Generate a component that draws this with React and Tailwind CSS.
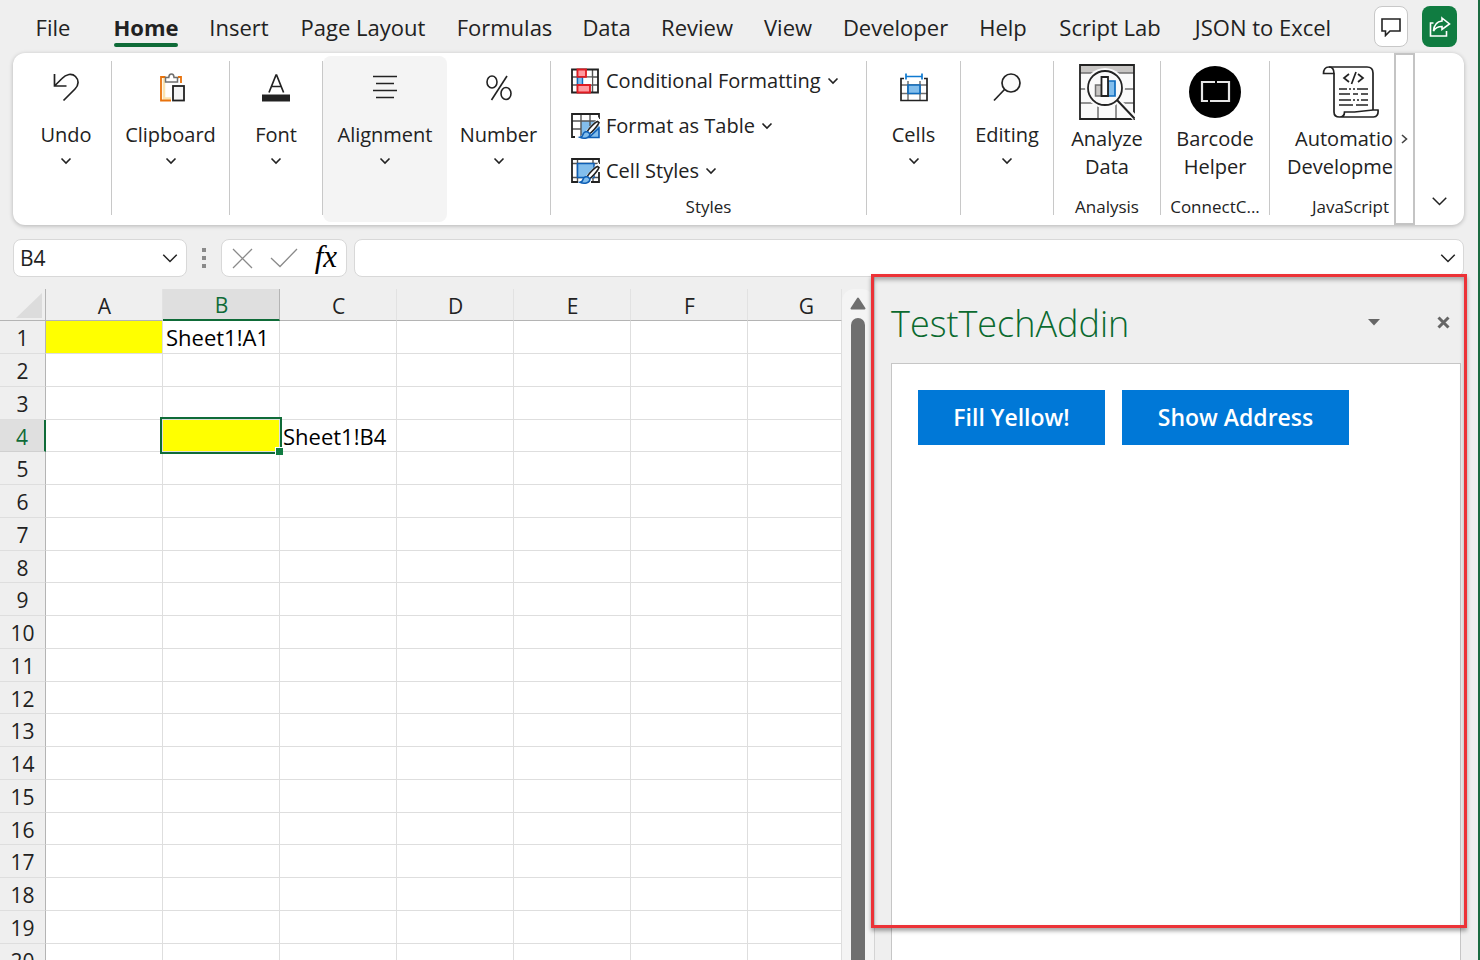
/**
 * App.jsx — Spreadsheet window with a docked add-in task pane
 *
 * Top to bottom: menu tabs, ribbon, formula bar, then the sheet
 * with its scrollbar on the left and the add-in pane on the right.
 */

// ── Menu tabs (each keeps its own label width) ───────────────────
const TABS = [
  { label: 'File', width: 'w-[34px] mr-3' },
  { label: 'Home', width: 'w-[64px]', active: true },
  { label: 'Insert', width: 'w-[58px]' },
  { label: 'Page Layout', width: 'w-[126px]' },
  { label: 'Formulas', width: 'w-[93px]' },
  { label: 'Data', width: 'w-[47px]' },
  { label: 'Review', width: 'w-[70px]' },
  { label: 'View', width: 'w-[48px]' },
  { label: 'Developer', width: 'w-[103px]' },
  { label: 'Help', width: 'w-[48px]' },
  { label: 'Script Lab', width: 'w-[102px]' },
  { label: 'JSON to Excel', width: 'w-[140px]' },
]

// ── Sheet data ───────────────────────────────────────────────────
const COLUMNS = ['A', 'B', 'C', 'D', 'E', 'F', 'G']
const ROWS = Array.from({ length: 20 }, (_, i) => i + 1)
const SELECTED = { col: 'B', row: 4 }
const CELLS = {
  A1: { fill: true },
  B1: { text: 'Sheet1!A1' },
  B4: { fill: true },
  C4: { text: 'Sheet1!B4' },
}

// ── Icons ────────────────────────────────────────────────────────
function Chevron({ className = 'w-[10px] h-[6px]', stroke = 1.6 }) {
  return (
    <svg viewBox="0 0 10 6" className={`${className} shrink-0 overflow-visible`} fill="none" stroke="#222" strokeWidth={stroke} aria-hidden="true">
      <path d="M0.5 0.5 5 5 9.5 0.5" />
    </svg>
  )
}

function UndoIcon() {
  return (
    <svg width="28" height="32" viewBox="0 0 28 32" fill="none" stroke="#222" strokeWidth="1.7" aria-hidden="true">
      <path d="M2.500 2v12h12M3 13.500 10 6.500C14 2 20 1 23.500 4.500S27 13 23 17L11.500 28.500" />
    </svg>
  )
}

function ClipboardIcon() {
  return (
    <svg width="28" height="32" viewBox="-1 0 28 32" fill="none" aria-hidden="true">
      <path d="M6 6v20.500h7M7 6h14" stroke="#fbe3b0" strokeWidth="2.5" />
      <path d="M7.500 5H3v23.500h10M20 5h3v6" stroke="#e8720c" strokeWidth="1.8" />
      <path d="M7.500 10V5.500h3.300c0-2 1-3.500 2.700-3.500S16 3.500 16 5.500h3.500V10z" stroke="#707070" strokeWidth="1.5" fill="#fff" />
      <rect x="15" y="14" width="11" height="14.500" fill="#f5f5f5" stroke="#222" strokeWidth="1.8" />
    </svg>
  )
}

function FontIcon() {
  return (
    <svg width="28" height="32" viewBox="0 0 28 32" fill="none" aria-hidden="true">
      <path d="M7 20.500 14 3h.6l7 17.500M9.500 14.500h9.600" stroke="#222" strokeWidth="1.700" />
      <path d="M0 22.500h28v7H0z" fill="#222" />
    </svg>
  )
}

function AlignIcon() {
  return (
    <svg width="26" height="32" viewBox="0 0 26 32" stroke="#222" strokeWidth="1.700" aria-hidden="true">
      <path d="M1 4.500h24M4 11.500h18M1 18.500h24M4 25.500h18" />
    </svg>
  )
}

function PercentIcon() {
  return (
    <svg width="28" height="32" viewBox="0 0 28 32" fill="none" stroke="#222" strokeWidth="1.600" aria-hidden="true">
      <ellipse cx="7" cy="10" rx="5" ry="6" />
      <ellipse cx="21" cy="21.500" rx="5" ry="6" />
      <path d="M22 4 6.500 28" />
    </svg>
  )
}

function CellsIcon() {
  return (
    <svg width="28" height="32" viewBox="0 0 28 32" fill="none" aria-hidden="true">
      <path d="M1 13h26M1 21.500h26M8 9v20M20 9v20" stroke="#707070" strokeWidth="1.500" />
      <path d="M4 6.500H1V28.500h26V6.500h-3" stroke="#222" strokeWidth="1.700" />
      <path d="M8 13h12v8.500H8z" fill="#83beec" stroke="#0f6cbd" strokeWidth="1.700" />
      <path d="M6 1.500v6M22 1.500v6M6 4.500h16" stroke="#0f7ad1" strokeWidth="1.700" />
    </svg>
  )
}

function EditingIcon() {
  return (
    <svg width="28" height="32" viewBox="0 0 28 32" fill="none" stroke="#222" strokeWidth="1.700" aria-hidden="true">
      <circle cx="18" cy="11" r="9" fill="#fafafa" />
      <path d="M11.500 17.500 1 28.500" />
    </svg>
  )
}

function ConditionalIcon() {
  return (
    <svg width="28" height="26" viewBox="0 0 28 26" fill="none" aria-hidden="true">
      <path d="M1 9h26M1 17h26M6.500 1v24M14 1v24M21.500 1v24" stroke="#555" strokeWidth="1.400" />
      <path d="M12 9.700h9v6.600h-9z" fill="#fff" />
      <path d="M1 1.500h26v23H1z" stroke="#222" strokeWidth="1.800" />
      <path d="M6.500 9h5v8h-5z" fill="#83beec" stroke="#0f6cbd" strokeWidth="1.400" />
      <path d="M6.500 1.500H15v7.300H6.500zM6.500 17H19v7.500H6.500z" fill="#ff9ba0" stroke="#e01b22" strokeWidth="1.800" />
    </svg>
  )
}

function Brush() {
  return (
    <>
      <path d="M9 25 28 5v8L16 27z" fill="#fff" />
      <path d="M26.500 9.500c-3 1-9.500 8-10.500 10.500l2 2c2.500-1 9-8.500 10-11.500z" fill="#fff" stroke="#222" strokeWidth="1.600" />
      <path d="M17 20c-2.500-1-4.500.5-5 2.500s-1.500 2.500-3 2.800c4 2 10 .7 10-3.300z" fill="#83beec" stroke="#0f5fb5" strokeWidth="1.600" />
    </>
  )
}

function TableStyleIcon() {
  return (
    <svg width="30" height="28" viewBox="0 0 30 28" fill="none" aria-hidden="true">
      <path d="M10 9h18v16H10z" fill="#83beec" />
      <path d="M18 25.500h10V16z" fill="#83beec" stroke="#0f5fb5" strokeWidth="1.600" />
      <path d="M1 9h27M1 17h9M10 2v22M19 2v12" stroke="#555" strokeWidth="1.400" />
      <path d="M28 7V2H1v23h3" stroke="#222" strokeWidth="1.800" />
      <Brush />
    </svg>
  )
}

function CellStyleIcon() {
  return (
    <svg width="30" height="28" viewBox="0 0 30 28" fill="none" aria-hidden="true">
      <path d="M1 6.500h27M6.500 2v23M22 2v23M1 20.500h27" stroke="#555" strokeWidth="1.400" />
      <path d="M6.500 6.500H23v14H6.500z" fill="#83beec" stroke="#0f5fb5" strokeWidth="1.600" />
      <path d="M28 7V2H1v23h6M20 25h8V15" stroke="#222" strokeWidth="1.800" />
      <Brush />
    </svg>
  )
}

function AnalyzeIcon() {
  return (
    <svg width="56" height="56" viewBox="0 0 56 56" fill="none" aria-hidden="true">
      <path d="M1 1h54v54H1z" fill="#fafafa" />
      <path d="M1 1h54v8H1z" fill="#c8c6c4" />
      <path d="M1 9h54M1 25h54M1 39h54M19 39v16M37 39v16" stroke="#707070" strokeWidth="1.500" />
      <path d="M1 1h54v54H1z" stroke="#222" strokeWidth="1.800" />
      <circle cx="26" cy="24" r="20" fill="#fafafa" />
      <path d="m38 36 18 18" stroke="#fafafa" strokeWidth="6" />
      <path d="M16.500 21h6v11h-6z" fill="#c8c6c4" stroke="#707070" strokeWidth="1.500" />
      <path d="M29 17h7v15h-7z" fill="#83beec" stroke="#0f6cbd" strokeWidth="1.700" />
      <path d="M22.500 13h6.500v19h-6.500z" fill="#fff" stroke="#222" strokeWidth="1.800" />
      <circle cx="26" cy="24" r="17" stroke="#222" strokeWidth="1.800" />
      <path d="m38 36 17.500 18.500" stroke="#222" strokeWidth="2" />
    </svg>
  )
}

function BarcodeIcon() {
  return (
    <svg width="56" height="56" viewBox="0 0 56 56" fill="none" aria-hidden="true">
      <circle cx="28" cy="28" r="26" fill="#000" />
      <path d="M28 18H15v19h6M23 37h19V18H30" stroke="#e5e5e5" strokeWidth="2.200" />
    </svg>
  )
}

function ScriptIcon() {
  return (
    <svg width="57" height="56" viewBox="0 0 57 56" fill="none" stroke="#222" strokeWidth="1.700" aria-hidden="true">
      <path d="M7 3h38c4 0 6 2 6 6v37" />
      <path d="M7 3C3 3 1.500 6 1.500 9.500H12C12 6 10.500 3 7 3z" />
      <path d="M12 9.500V48c0 3 2 5 5.500 5s5-2 5-5h10L51 46h5c.5 4-1 7-4.500 7h-34" />
      <path d="m27 10-5 4 5 4M36 10l5 4-5 4M34 8l-4.500 12" />
      <path d="M17 25h8M27 25h2M31 25h2M35 25h11M17 30h11M31 30h5M39 30h7M17 36h12M31 36h2M35 36h2M39 36h7M17 41h14M34 41h12" strokeWidth="1.500" />
    </svg>
  )
}

// ── Ribbon building blocks ───────────────────────────────────────
function Divider() {
  return <span className="w-px shrink-0 mt-2 mb-[10px] bg-[#c8c8c8]" />
}

function CollapsedGroup({ label, icon: Icon, className }) {
  return (
    <button type="button" className={`${className} shrink-0 flex flex-col items-center pt-[17px]`}>
      <span className="h-9 flex items-center"><Icon /></span>
      <span className="mt-[15px] leading-7">{label}</span>
      <span className="mt-[7px] h-[10px] flex items-center"><Chevron /></span>
    </button>
  )
}

function LargeGroup({ lines, caption, icon: Icon, className }) {
  return (
    <div className={`${className} shrink-0 flex flex-col items-center pt-[11px]`}>
      <button type="button" className="flex flex-col items-center">
        <Icon />
        <span className="mt-[5px] leading-7">{lines[0]}</span>
        <span className="leading-7">{lines[1]}</span>
      </button>
      <span className="mt-[14px] text-[17px] leading-6">{caption}</span>
    </div>
  )
}

function StyleCommand({ label, icon: Icon }) {
  return (
    <button type="button" className="h-[45px] flex items-center">
      <span className="w-[35px] flex"><Icon /></span>
      <span>{label}</span>
      <span className="ml-[7px]"><Chevron /></span>
    </button>
  )
}

function MenuBar() {
  return (
    <header className="h-[53px] shrink-0 flex items-start justify-between pl-9 pr-[21px]">
      <nav className="flex gap-8 pt-[11px]">
        {TABS.map(({ label, width, active }) => (
          <button
            key={label}
            type="button"
            className={`${width} shrink-0 flex flex-col items-center text-[22px] leading-8 whitespace-nowrap ${active ? 'font-bold' : ''}`}
          >
            {label}
            {active && <span className="w-full h-1 rounded-full bg-[#0f6b38]" />}
          </button>
        ))}
      </nav>
      <div className="flex gap-[14px] pt-[6px]">
        <button type="button" aria-label="Comments" className="w-[34px] h-[41px] flex items-center justify-center bg-white border border-[#c8c8c8] rounded-lg">
          <svg width="20" height="20" viewBox="0 0 20 20" fill="none" stroke="#222" strokeWidth="1.600" aria-hidden="true">
            <path d="M1 2h18v12H9l-4.500 4.500V14H1z" />
          </svg>
        </button>
        <button type="button" aria-label="Share" className="w-[35px] h-[41px] flex items-center justify-center bg-[#107c41] rounded-lg">
          <svg width="22" height="22" viewBox="0 0 22 22" fill="none" stroke="#fff" strokeWidth="1.600" aria-hidden="true">
            <path d="M4.500 7H1.500v13h16v-5" />
            <path d="M13 2l7.500 6L13 13.500V10.500c-4 0-6.500 1-8.500 4.500.5-6 3.500-9.500 8.500-10z" />
          </svg>
        </button>
      </div>
    </header>
  )
}

function Ribbon() {
  return (
    <section className="h-[172px] shrink-0 ml-[13px] mr-[14px] flex bg-white rounded-xl shadow-[0_1px_4px_rgba(0,0,0,0.25)] text-[20px]">
      <div className="flex-1 min-w-0 flex overflow-hidden">
        <CollapsedGroup label="Undo" icon={UndoIcon} className="w-[98px] pl-2" />
        <Divider />
        <CollapsedGroup label="Clipboard" icon={ClipboardIcon} className="w-[117px]" />
        <Divider />
        <CollapsedGroup label="Font" icon={FontIcon} className="w-[92px]" />
        <Divider />
        <div className="w-[124px] shrink-0 flex py-[3px]">
          <button type="button" className="w-full flex flex-col items-center pt-[14px] bg-[#f4f4f4] rounded-lg">
            <span className="h-9 flex items-center"><AlignIcon /></span>
            <span className="mt-[15px] leading-7">Alignment</span>
            <span className="mt-[7px] h-[10px] flex items-center"><Chevron /></span>
          </button>
        </div>
        <CollapsedGroup label="Number" icon={PercentIcon} className="w-[103px]" />
        <Divider />
        <div className="w-[315px] shrink-0 flex flex-col items-start pt-[5px] pl-5">
          <StyleCommand label="Conditional Formatting" icon={ConditionalIcon} />
          <StyleCommand label="Format as Table" icon={TableStyleIcon} />
          <StyleCommand label="Cell Styles" icon={CellStyleIcon} />
          <span className="w-full pr-5 mt-[2px] text-center text-[17px] leading-6">Styles</span>
        </div>
        <Divider />
        <CollapsedGroup label="Cells" icon={CellsIcon} className="w-[93px]" />
        <Divider />
        <CollapsedGroup label="Editing" icon={EditingIcon} className="w-[92px]" />
        <Divider />
        <LargeGroup lines={['Analyze', 'Data']} caption="Analysis" icon={AnalyzeIcon} className="w-[106px]" />
        <Divider />
        <LargeGroup lines={['Barcode', 'Helper']} caption="ConnectC..." icon={BarcodeIcon} className="w-[108px]" />
        <Divider />

        {/* Last group runs up against the scroll button */}
        <div className="flex-1 min-w-0 flex flex-col items-end pt-[11px] pr-px">
          <button type="button" className="flex flex-col items-end">
            <span className="flex pr-[14px]"><ScriptIcon /></span>
            <span className="mt-[5px] leading-7">Automatio</span>
            <span className="leading-7">Developme</span>
          </button>
          <span className="mt-[14px] pr-1 text-[17px] leading-6">JavaScript</span>
        </div>
      </div>
      <button type="button" aria-label="Scroll ribbon" className="w-[21px] shrink-0 flex items-center justify-center border-2 border-[#c4c4c4]">
        <svg width="7" height="10" viewBox="0 0 7 10" fill="none" stroke="#444" strokeWidth="1.600" aria-hidden="true">
          <path d="M1 1l4.500 4L1 9" />
        </svg>
      </button>
      <div className="w-[49px] shrink-0 flex items-end justify-center pb-[19px]">
        <button type="button" aria-label="Collapse ribbon" className="flex">
          <Chevron className="w-[17px] h-[9px]" stroke={1} />
        </button>
      </div>
    </section>
  )
}

function FormulaBar() {
  return (
    <div className="shrink-0 flex items-center pt-[14px] pl-[13px] pr-[14px]">
      <div className="w-[174px] h-[38px] flex items-center pl-[6px] pr-2 bg-white border border-[#d8d8d8] rounded-lg">
        <input aria-label="Name box" defaultValue="B4" className="flex-1 min-w-0 pt-[2px] text-[21px] outline-none" />
        <button type="button" aria-label="Show names" className="flex">
          <Chevron className="w-4 h-[9px]" stroke={1} />
        </button>
      </div>
      <div className="w-[34px] flex flex-col items-center gap-1">
        <span className="size-[4px] bg-[#8a8a8a]" />
        <span className="size-[4px] bg-[#8a8a8a]" />
        <span className="size-[4px] bg-[#8a8a8a]" />
      </div>
      <div className="w-[126px] h-[38px] flex items-center justify-between pl-[10px] pr-[9px] bg-white border border-[#d8d8d8] rounded-lg">
        <button type="button" aria-label="Cancel">
          <svg width="21" height="21" viewBox="0 0 21 21" stroke="#8a8a8a" strokeWidth="1.300" aria-hidden="true">
            <path d="m1 1 19 19M20 1 1 20" />
          </svg>
        </button>
        <button type="button" aria-label="Enter">
          <svg width="28" height="20" viewBox="0 0 28 20" fill="none" stroke="#8a8a8a" strokeWidth="1.300" aria-hidden="true">
            <path d="m1 10 9 8.500L27 1" />
          </svg>
        </button>
        <button type="button" aria-label="Insert function" className="pb-[2px] font-['Liberation_Serif',serif] italic text-[31px] leading-8 text-black">
          fx
        </button>
      </div>
      <div className="flex-1 min-w-0 h-[38px] ml-[7px] flex items-center px-[7px] bg-white border border-[#d8d8d8] rounded-lg">
        <input aria-label="Formula" className="flex-1 min-w-0 text-[21px] outline-none" />
        <button type="button" aria-label="Expand formula bar" className="flex">
          <Chevron className="w-4 h-[9px]" stroke={1} />
        </button>
      </div>
    </div>
  )
}

function Cell({ id, selected }) {
  const cell = CELLS[id] || {}

  return (
    <td className={`p-0 border-r border-b border-[#dedede] ${cell.fill ? 'bg-[#ffff00]' : ''} ${selected ? 'relative z-10' : ''}`}>
      {cell.text && (
        <span className="block pl-[3px] text-[22px] leading-7 text-black">{cell.text}</span>
      )}
      {selected && (
        <span className="absolute -inset-[3px] border-2 border-[#0f6b38]">
          <span className="absolute -right-[3px] -bottom-[3px] size-[8px] bg-[#107c41] border-t border-l border-white" />
        </span>
      )}
    </td>
  )
}

function Sheet() {
  return (
    <div className="flex-1 min-w-0 mt-[12px] overflow-hidden">
      <table className="w-full table-fixed border-separate border-spacing-0 text-[21px]">
        <thead>
          <tr className="h-8">
            <th className="w-[46px] p-0 border-r border-b border-[#b4b4b4] bg-[#efefef]">
              <svg width="44" height="31" viewBox="0 0 44 31" aria-hidden="true">
                <path d="M42 4v25H16z" fill="#dcdcdc" />
              </svg>
            </th>
            {COLUMNS.map(col => (
              <th
                key={col}
                className={`p-0 pt-[2px] overflow-hidden font-normal leading-7 ${col === 'G' ? '' : 'w-[117px]'} ${
                  col === SELECTED.col
                    ? 'bg-[#dfdfdf] text-[#0f6b38] border-r border-r-[#b4b4b4] border-b-2 border-b-[#0f6b38]'
                    : 'border-r border-r-[#e2e2e2] border-b border-b-[#b4b4b4]'
                }`}
              >
                <span className="block w-[117px] text-center">{col}</span>
              </th>
            ))}
          </tr>
        </thead>
        <tbody>
          {ROWS.map(row => (
            <tr key={row} className="h-[33px] nth-[4n]:h-8 bg-white">
              <th
                className={`p-0 pt-[2px] font-normal leading-7 ${
                  row === SELECTED.row
                    ? 'bg-[#dfdfdf] text-[#0f6b38] border-b border-b-[#d0d0d0] border-r-2 border-r-[#0f6b38]'
                    : 'bg-[#efefef] border-b border-b-[#dedede] border-r border-r-[#b4b4b4]'
                }`}
              >
                {row}
              </th>
              {COLUMNS.map(col => (
                <Cell key={col} id={`${col}${row}`} selected={col === SELECTED.col && row === SELECTED.row} />
              ))}
            </tr>
          ))}
        </tbody>
      </table>
    </div>
  )
}

function Scrollbar() {
  return (
    <div className="w-[32px] shrink-0 mt-[12px] pr-[1px] flex flex-col items-center bg-[#f4f4f4] rounded-t-xl">
      <svg width="16" height="13" viewBox="0 0 16 13" className="mt-2 shrink-0" aria-hidden="true">
        <path d="M8 1.500 14.500 11.500h-13z" fill="#6f6f6f" stroke="#6f6f6f" strokeWidth="2" strokeLinejoin="round" />
      </svg>
      <span className="w-[14px] flex-1 mt-2 rounded-t-full bg-[#6f6f6f]" />
    </div>
  )
}

function TaskPane() {
  return (
    <aside className="relative w-[590px] shrink-0 mr-[14px] flex flex-col pl-4 pr-[3px] border-l border-[#d4d4d4]">
      <div className="h-[86px] shrink-0 flex items-center pt-2 pr-2">
        <h1 className="flex-1 font-light text-[36px] leading-10 text-[#0b6a2f]">TestTechAddin</h1>
        <button type="button" aria-label="Pane options" className="mb-1 mr-[57px]">
          <svg width="12" height="7" viewBox="0 0 12 7" aria-hidden="true">
            <path d="M0 0h12L6 6.500z" fill="#666" />
          </svg>
        </button>
        <button type="button" aria-label="Close pane" className="mb-1 mr-[3px]">
          <svg width="13" height="13" viewBox="0 0 13 13" stroke="#666" strokeWidth="3" aria-hidden="true">
            <path d="m1.500 1.500 10 10M11.500 1.500l-10 10" />
          </svg>
        </button>
      </div>
      <div className="flex-1 flex items-start gap-[17px] pt-[26px] pl-[26px] bg-white border border-b-0 border-[#c6c6c6]">
        <button type="button" className="w-[187px] h-[55px] bg-[#0078d7] text-white font-semibold text-[23px]">Fill Yellow!</button>
        <button type="button" className="w-[227px] h-[55px] bg-[#0078d7] text-white font-semibold text-[23px]">Show Address</button>
      </div>

      {/* Highlight frame around the add-in */}
      <div className="absolute -left-[4px] -right-[3px] -top-[3px] bottom-8 border-3 border-[#ec3237] shadow-[0_3px_4px_rgba(0,0,0,0.35),inset_0_3px_4px_rgba(0,0,0,0.3)] pointer-events-none" />
    </aside>
  )
}

export default function App() {
  return (
    <div className="h-screen flex flex-col overflow-hidden bg-[#efefef] border-r-2 border-[#1b6b41] font-['Open_Sans','Noto_Sans',sans-serif] text-[#222]">
      <MenuBar />
      <Ribbon />
      <FormulaBar />
      <main className="flex-1 min-h-0 flex">
        <Sheet />
        <Scrollbar />
        <TaskPane />
      </main>
    </div>
  )
}
